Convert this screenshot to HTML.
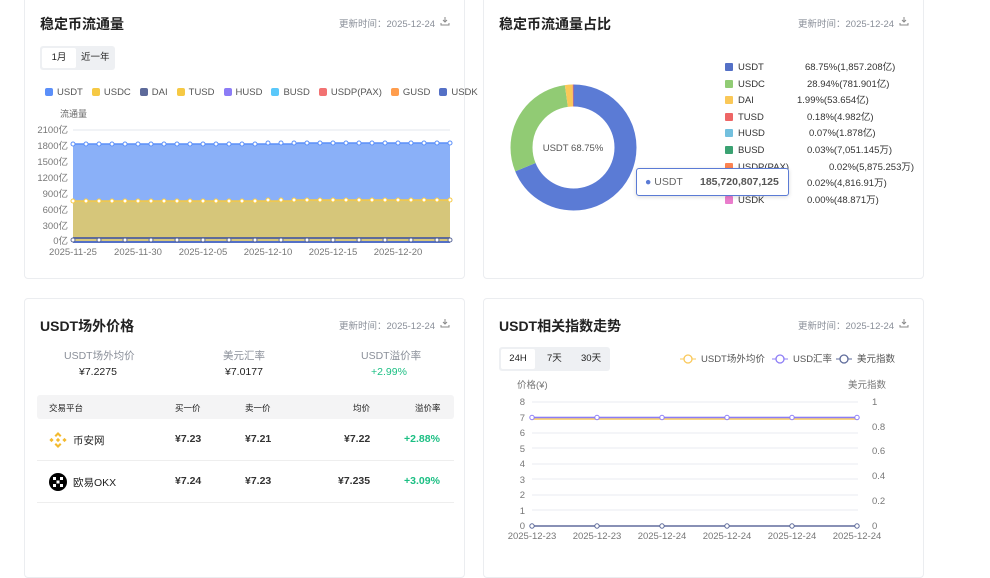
<!DOCTYPE html>
<html><head><meta charset="utf-8"><style>
*{margin:0;padding:0;box-sizing:border-box}
body{width:990px;height:560px;background:#fff;font-family:"Liberation Sans","Noto Sans CJK SC",sans-serif;position:relative;overflow:hidden;color:#222}
.card{position:absolute;background:#fff;border:1px solid #ebedf0;border-radius:4px}
.t{position:absolute;font-size:14px;font-weight:bold;color:#222}
.upd{position:absolute;font-size:9.5px;color:#8a8f99}
.abs{position:absolute;white-space:nowrap}
.sm{font-size:9.5px;color:#666}
.lg i{display:inline-block;width:8px;height:8px;border-radius:2px;margin:0 4px 0 0;vertical-align:-1px}
.lg span{margin-right:9px}
.l2 i{display:inline-block;width:8px;height:8px;border-radius:1px;margin-right:5px;vertical-align:-1px}
</style></head><body>
<div class="card" style="left:24px;top:-10px;width:441px;height:289px"></div>
<div class="card" style="left:483px;top:-10px;width:441px;height:289px"></div>
<div class="card" style="left:24px;top:298px;width:441px;height:280px"></div>
<div class="card" style="left:483px;top:298px;width:441px;height:280px"></div>

<!-- card 1 -->
<div class="t" style="left:40px;top:14px">稳定币流通量</div>
<div class="upd" style="left:339px;top:16px">更新时间：2025-12-24</div>
<svg class="abs" style="left:440px;top:16px" width="10" height="10"><path d="M5 1v5M3 4l2 2 2-2M1 7v2h8V7" stroke="#888" fill="none" stroke-width="1"/></svg>
<div class="abs" style="left:40px;top:46px;width:75px;height:24px;background:#eef0f3;border-radius:3px"></div>
<div class="abs" style="left:42px;top:48px;width:34px;height:20px;background:#fff;border-radius:2px;font-size:9.5px;text-align:center;line-height:20px">1月</div>
<div class="abs" style="left:81px;top:48px;font-size:9.5px;line-height:20px">近一年</div>
<div class="abs sm lg" style="left:45px;top:87px;font-size:9.5px;color:#555">
<span><i style="background:#5b8ff9"></i>USDT</span><span><i style="background:#f6c944"></i>USDC</span><span><i style="background:#5d6a9a"></i>DAI</span><span><i style="background:#f6c944"></i>TUSD</span><span><i style="background:#8c7cf6"></i>HUSD</span><span><i style="background:#5ac8fa"></i>BUSD</span><span><i style="background:#f27272"></i>USDP(PAX)</span><span><i style="background:#ff9d4d"></i>GUSD</span><span><i style="background:#5470c6"></i>USDK</span></div>
<div class="abs sm" style="left:60px;top:107px;font-size:9px">流通量</div>
<svg class="abs" style="left:30px;top:120px" width="430" height="145" font-family="Liberation Sans" font-size="9.5" fill="#777">
<g text-anchor="end">
<text x="38" y="13">2100亿</text><text x="38" y="29">1800亿</text><text x="38" y="45">1500亿</text><text x="38" y="61">1200亿</text><text x="38" y="77">900亿</text><text x="38" y="93">600亿</text><text x="38" y="109">300亿</text><text x="38" y="124">0亿</text></g>
<line x1="43" y1="10" x2="420" y2="10" stroke="#e3e7ee"/>
<path d="M43 24L261 24L268 23L420 23L420 121L43 121Z" fill="#8ab0f8"/>
<path d="M43 81L261 81L268 80L420 80L420 121L43 121Z" fill="#d6c67a"/>
<path d="M43 24L261 24L268 23L420 23" stroke="#5b8ff9" fill="none" stroke-width="1.5"/>
<path d="M43 81L261 81L268 80L420 80" stroke="#f6c944" fill="none" stroke-width="1.5"/>
<line x1="43" y1="118" x2="420" y2="118" stroke="#5d6a9a" stroke-width="2"/>
<line x1="43" y1="122" x2="420" y2="122" stroke="#5470c6" stroke-width="2"/>
<g fill="#fff" stroke-width="1">
<g stroke="#5b8ff9">
<circle cx="43" cy="24" r="2"/><circle cx="56" cy="24" r="2"/><circle cx="69" cy="24" r="2"/><circle cx="82" cy="24" r="2"/><circle cx="95" cy="24" r="2"/><circle cx="108" cy="24" r="2"/><circle cx="121" cy="24" r="2"/><circle cx="134" cy="24" r="2"/><circle cx="147" cy="24" r="2"/><circle cx="160" cy="24" r="2"/><circle cx="173" cy="24" r="2"/><circle cx="186" cy="24" r="2"/><circle cx="199" cy="24" r="2"/><circle cx="212" cy="24" r="2"/><circle cx="225" cy="24" r="2"/><circle cx="238" cy="23" r="2"/><circle cx="251" cy="23" r="2"/><circle cx="264" cy="23" r="2"/><circle cx="277" cy="23" r="2"/><circle cx="290" cy="23" r="2"/><circle cx="303" cy="23" r="2"/><circle cx="316" cy="23" r="2"/><circle cx="329" cy="23" r="2"/><circle cx="342" cy="23" r="2"/><circle cx="355" cy="23" r="2"/><circle cx="368" cy="23" r="2"/><circle cx="381" cy="23" r="2"/><circle cx="394" cy="23" r="2"/><circle cx="407" cy="23" r="2"/><circle cx="420" cy="23" r="2"/></g>
<g stroke="#f6c944">
<circle cx="43" cy="81" r="2"/><circle cx="56" cy="81" r="2"/><circle cx="69" cy="81" r="2"/><circle cx="82" cy="81" r="2"/><circle cx="95" cy="81" r="2"/><circle cx="108" cy="81" r="2"/><circle cx="121" cy="81" r="2"/><circle cx="134" cy="81" r="2"/><circle cx="147" cy="81" r="2"/><circle cx="160" cy="81" r="2"/><circle cx="173" cy="81" r="2"/><circle cx="186" cy="81" r="2"/><circle cx="199" cy="81" r="2"/><circle cx="212" cy="81" r="2"/><circle cx="225" cy="81" r="2"/><circle cx="238" cy="80" r="2"/><circle cx="251" cy="80" r="2"/><circle cx="264" cy="80" r="2"/><circle cx="277" cy="80" r="2"/><circle cx="290" cy="80" r="2"/><circle cx="303" cy="80" r="2"/><circle cx="316" cy="80" r="2"/><circle cx="329" cy="80" r="2"/><circle cx="342" cy="80" r="2"/><circle cx="355" cy="80" r="2"/><circle cx="368" cy="80" r="2"/><circle cx="381" cy="80" r="2"/><circle cx="394" cy="80" r="2"/><circle cx="407" cy="80" r="2"/><circle cx="420" cy="80" r="2"/></g>
<g stroke="#5d6a9a">
<circle cx="43" cy="120" r="2"/><circle cx="69" cy="120" r="2"/><circle cx="95" cy="120" r="2"/><circle cx="121" cy="120" r="2"/><circle cx="147" cy="120" r="2"/><circle cx="173" cy="120" r="2"/><circle cx="199" cy="120" r="2"/><circle cx="225" cy="120" r="2"/><circle cx="251" cy="120" r="2"/><circle cx="277" cy="120" r="2"/><circle cx="303" cy="120" r="2"/><circle cx="329" cy="120" r="2"/><circle cx="355" cy="120" r="2"/><circle cx="381" cy="120" r="2"/><circle cx="407" cy="120" r="2"/><circle cx="420" cy="120" r="2"/></g>
</g>
<g text-anchor="middle"><text x="43" y="135">2025-11-25</text><text x="108" y="135">2025-11-30</text><text x="173" y="135">2025-12-05</text><text x="238" y="135">2025-12-10</text><text x="303" y="135">2025-12-15</text><text x="368" y="135">2025-12-20</text></g>
</svg>

<!-- card 2 -->
<div class="t" style="left:499px;top:14px">稳定币流通量占比</div>
<div class="upd" style="left:798px;top:16px">更新时间：2025-12-24</div>
<svg class="abs" style="left:899px;top:16px" width="10" height="10"><path d="M5 1v5M3 4l2 2 2-2M1 7v2h8V7" stroke="#888" fill="none" stroke-width="1"/></svg>
<svg class="abs" style="left:500px;top:75px" width="150" height="150">
<g transform="translate(73.5,72.5) rotate(-90)">
<circle r="52" fill="none" stroke="#5b7bd5" stroke-width="22" stroke-dasharray="224.6 326.7"/>
<circle r="52" fill="none" stroke="#91cb74" stroke-width="22" stroke-dasharray="0 224.6 94.6 326.7"/>
<circle r="52" fill="none" stroke="#fac858" stroke-width="22" stroke-dasharray="0 319.2 6.5 326.7"/>
<circle r="52" fill="none" stroke="#ee6666" stroke-width="22" stroke-dasharray="0 325.7 1 326.7"/>
</g>
<text x="73" y="76" text-anchor="middle" font-family="Liberation Sans" font-size="9.5" fill="#555">USDT 68.75%</text>
</svg>
<div class="abs l2" style="left:725px;top:60px;font-size:9.5px;color:#333;line-height:16.6px">
<div><i style="background:#5470c6"></i>USDT<span class="abs" style="left:80px">68.75%(1,857.208亿)</span></div>
<div><i style="background:#91cc75"></i>USDC<span class="abs" style="left:82px">28.94%(781.901亿)</span></div>
<div><i style="background:#fac858"></i>DAI<span class="abs" style="left:72px">1.99%(53.654亿)</span></div>
<div><i style="background:#ee6666"></i>TUSD<span class="abs" style="left:82px">0.18%(4.982亿)</span></div>
<div><i style="background:#73c0de"></i>HUSD<span class="abs" style="left:84px">0.07%(1.878亿)</span></div>
<div><i style="background:#3ba272"></i>BUSD<span class="abs" style="left:82px">0.03%(7,051.145万)</span></div>
<div><i style="background:#fc8452"></i>USDP(PAX)<span class="abs" style="left:104px">0.02%(5,875.253万)</span></div>
<div><i style="background:#9a60b4"></i>GUSD<span class="abs" style="left:82px">0.02%(4,816.91万)</span></div>
<div><i style="background:#ea7ccc"></i>USDK<span class="abs" style="left:82px">0.00%(48.871万)</span></div>
</div>
<div class="abs" style="left:636px;top:168px;width:153px;height:28px;background:#fff;border:1px solid #5b7bd5;border-radius:3px;box-shadow:0 1px 4px rgba(0,0,0,.15);font-size:10.5px;line-height:26px;padding-left:8px;color:#666"><span style="color:#5b7bd5">●</span> USDT<b style="position:absolute;left:63px;color:#555">185,720,807,125</b></div>

<!-- card 3 -->
<div class="t" style="left:40px;top:316px">USDT场外价格</div>
<div class="upd" style="left:339px;top:318px">更新时间：2025-12-24</div>
<svg class="abs" style="left:440px;top:318px" width="10" height="10"><path d="M5 1v5M3 4l2 2 2-2M1 7v2h8V7" stroke="#888" fill="none" stroke-width="1"/></svg>
<div class="abs" style="left:64px;top:348px;font-size:10.5px;color:#8a8f99">USDT场外均价</div>
<div class="abs" style="left:79px;top:366px;font-size:10.5px">¥7.2275</div>
<div class="abs" style="left:223px;top:348px;font-size:10.5px;color:#8a8f99">美元汇率</div>
<div class="abs" style="left:225px;top:366px;font-size:10.5px">¥7.0177</div>
<div class="abs" style="left:361px;top:348px;font-size:10.5px;color:#8a8f99">USDT溢价率</div>
<div class="abs" style="left:371px;top:366px;font-size:10.5px;color:#1bbf83">+2.99%</div>
<div class="abs" style="left:37px;top:395px;width:417px;height:24px;background:#f4f4f5;border-radius:3px"></div>
<div class="abs" style="left:49px;top:402px;font-size:8.5px">交易平台</div>
<div class="abs" style="left:175px;top:402px;font-size:8.5px">买一价</div>
<div class="abs" style="left:245px;top:402px;font-size:8.5px">卖一价</div>
<div class="abs" style="left:353px;top:402px;font-size:8.5px">均价</div>
<div class="abs" style="left:415px;top:402px;font-size:8.5px">溢价率</div>
<svg class="abs" style="left:49px;top:431px" width="18" height="18"><g fill="#f3ba2f"><path d="M9 1l3.5 3.5-1.5 1.5L9 4 7 6 5.5 4.5z"/><path d="M9 17l3.5-3.5-1.5-1.5L9 14 7 12l-1.5 1.5z"/><rect x="1" y="7.5" width="3" height="3" transform="rotate(45 2.5 9)"/><rect x="14" y="7.5" width="3" height="3" transform="rotate(45 15.5 9)"/><rect x="7.5" y="7.5" width="3" height="3" transform="rotate(45 9 9)"/></g></svg>
<div class="abs" style="left:73px;top:433px;font-size:10.5px">币安网</div>
<div class="abs" style="left:175px;top:433px;font-size:10.5px;font-weight:bold;color:#333">¥7.23</div>
<div class="abs" style="left:245px;top:433px;font-size:10.5px;font-weight:bold;color:#333">¥7.21</div>
<div class="abs" style="left:344px;top:433px;font-size:10.5px;font-weight:bold;color:#333">¥7.22</div>
<div class="abs" style="left:404px;top:433px;font-size:10.5px;font-weight:bold;color:#1bbf83">+2.88%</div>
<div class="abs" style="left:37px;top:460px;width:417px;height:1px;background:#eee"></div>
<svg class="abs" style="left:49px;top:473px" width="18" height="18"><circle cx="9" cy="9" r="9" fill="#000"/><g fill="#fff"><rect x="4" y="4" width="3" height="3"/><rect x="11" y="4" width="3" height="3"/><rect x="7.5" y="7.5" width="3" height="3"/><rect x="4" y="11" width="3" height="3"/><rect x="11" y="11" width="3" height="3"/></g></svg>
<div class="abs" style="left:73px;top:475px;font-size:10.5px">欧易OKX</div>
<div class="abs" style="left:175px;top:475px;font-size:10.5px;font-weight:bold;color:#333">¥7.24</div>
<div class="abs" style="left:245px;top:475px;font-size:10.5px;font-weight:bold;color:#333">¥7.23</div>
<div class="abs" style="left:338px;top:475px;font-size:10.5px;font-weight:bold;color:#333">¥7.235</div>
<div class="abs" style="left:404px;top:475px;font-size:10.5px;font-weight:bold;color:#1bbf83">+3.09%</div>
<div class="abs" style="left:37px;top:502px;width:417px;height:1px;background:#eee"></div>

<!-- card 4 -->
<div class="t" style="left:499px;top:316px">USDT相关指数走势</div>
<div class="upd" style="left:798px;top:318px">更新时间：2025-12-24</div>
<svg class="abs" style="left:899px;top:318px" width="10" height="10"><path d="M5 1v5M3 4l2 2 2-2M1 7v2h8V7" stroke="#888" fill="none" stroke-width="1"/></svg>
<div class="abs" style="left:499px;top:347px;width:111px;height:24px;background:#eef0f3;border-radius:3px"></div>
<div class="abs" style="left:501px;top:349px;width:34px;height:20px;background:#fff;border-radius:2px;font-size:9.5px;text-align:center;line-height:20px">24H</div>
<div class="abs" style="left:547px;top:349px;font-size:9.5px;line-height:20px">7天</div>
<div class="abs" style="left:581px;top:349px;font-size:9.5px;line-height:20px">30天</div>
<svg class="abs" style="left:680px;top:352px" width="240" height="14" font-family="Liberation Sans,Noto Sans CJK SC" font-size="9.5" fill="#555">
<line x1="0" y1="7" x2="16" y2="7" stroke="#fac858"/><circle cx="8" cy="7" r="4" fill="#fff" stroke="#fac858" stroke-width="1.3"/><text x="21" y="10">USDT场外均价</text>
<line x1="92" y1="7" x2="108" y2="7" stroke="#8c7cf6"/><circle cx="100" cy="7" r="4" fill="#fff" stroke="#8c7cf6" stroke-width="1.3"/><text x="113" y="10">USD汇率</text>
<line x1="156" y1="7" x2="172" y2="7" stroke="#5d6a9a"/><circle cx="164" cy="7" r="4" fill="#fff" stroke="#5d6a9a" stroke-width="1.3"/><text x="177" y="10">美元指数</text>
</svg>
<svg class="abs" style="left:500px;top:378px" width="420" height="170" font-family="Liberation Sans,Noto Sans CJK SC" font-size="9.5" fill="#777">
<text x="17" y="10">价格(¥)</text><text x="348" y="10">美元指数</text>
<g stroke="#e8ebf2"><line x1="32" y1="24" x2="358" y2="24"/><line x1="32" y1="39" x2="358" y2="39"/><line x1="32" y1="55" x2="358" y2="55"/><line x1="32" y1="70" x2="358" y2="70"/><line x1="32" y1="86" x2="358" y2="86"/><line x1="32" y1="101" x2="358" y2="101"/><line x1="32" y1="117" x2="358" y2="117"/><line x1="32" y1="132" x2="358" y2="132"/></g>
<g text-anchor="end"><text x="25" y="27">8</text><text x="25" y="43">7</text><text x="25" y="58">6</text><text x="25" y="74">5</text><text x="25" y="89">4</text><text x="25" y="105">3</text><text x="25" y="120">2</text><text x="25" y="136">1</text><text x="25" y="151">0</text></g>
<g><text x="372" y="27">1</text><text x="372" y="52">0.8</text><text x="372" y="76">0.6</text><text x="372" y="101">0.4</text><text x="372" y="126">0.2</text><text x="372" y="151">0</text></g>
<line x1="32" y1="41" x2="358" y2="41" stroke="#fac858" stroke-width="1.5"/>
<line x1="32" y1="39.5" x2="358" y2="39.5" stroke="#8c7cf6" stroke-width="1.5"/>
<line x1="32" y1="148" x2="358" y2="148" stroke="#8890b5" stroke-width="2"/>
<g fill="#fff" stroke="#8c7cf6"><circle cx="32" cy="39.5" r="2.2"/><circle cx="97" cy="39.5" r="2.2"/><circle cx="162" cy="39.5" r="2.2"/><circle cx="227" cy="39.5" r="2.2"/><circle cx="292" cy="39.5" r="2.2"/><circle cx="357" cy="39.5" r="2.2"/></g>
<g fill="#fff" stroke="#5d6a9a"><circle cx="32" cy="148" r="2.2"/><circle cx="97" cy="148" r="2.2"/><circle cx="162" cy="148" r="2.2"/><circle cx="227" cy="148" r="2.2"/><circle cx="292" cy="148" r="2.2"/><circle cx="357" cy="148" r="2.2"/></g>
<g text-anchor="middle"><text x="32" y="161">2025-12-23</text><text x="97" y="161">2025-12-23</text><text x="162" y="161">2025-12-24</text><text x="227" y="161">2025-12-24</text><text x="292" y="161">2025-12-24</text><text x="357" y="161">2025-12-24</text></g>
</svg>
</body></html>
